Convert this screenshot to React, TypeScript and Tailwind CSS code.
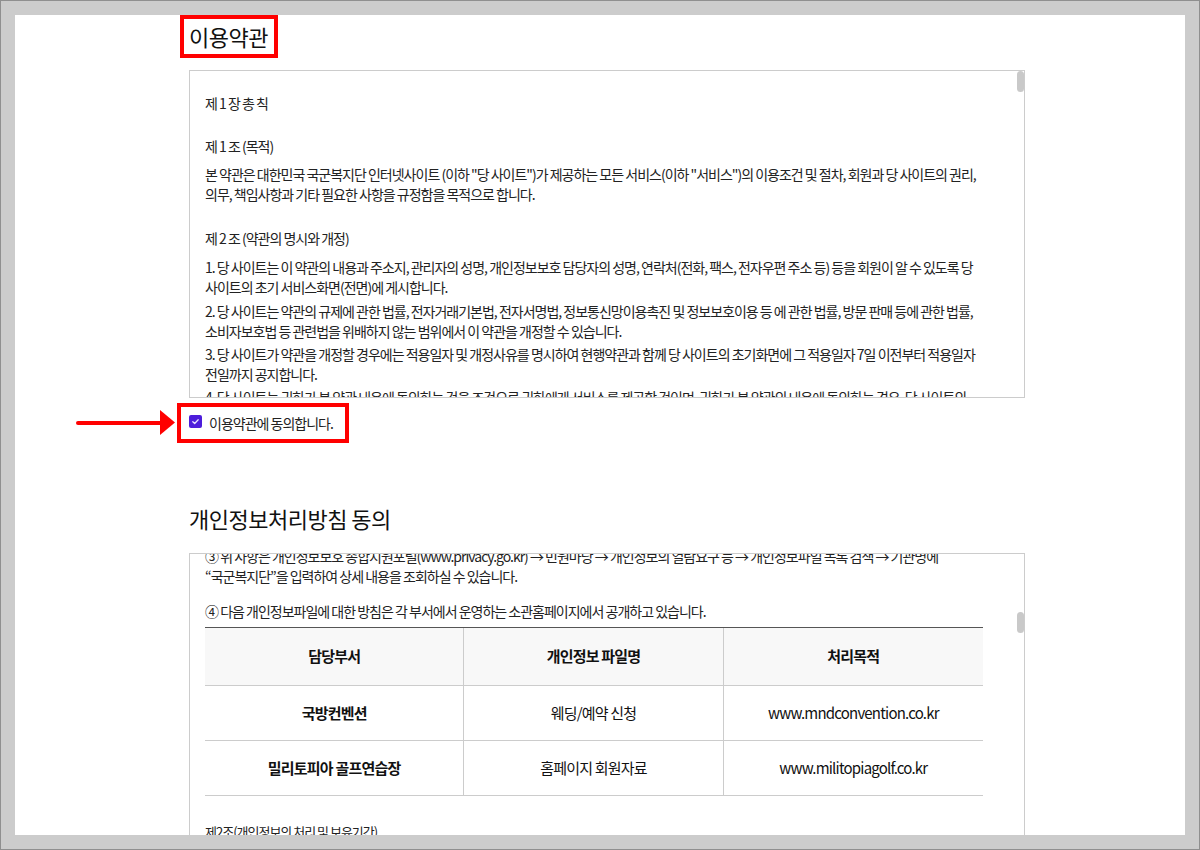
import React from "react";

function Line({ children, className = "" }: { children: React.ReactNode; className?: string }) {
  return <p className={"h-[20px] leading-[20px] whitespace-nowrap " + className}>{children}</p>;
}

export default function App() {
  return (
    <div className="w-[1200px] h-[850px] bg-[#cccccc] border border-[#8f8f8f] p-[14px] font-['Noto_Sans_CJK_KR',sans-serif] text-[#222222]">
      <div className="relative h-full bg-white overflow-hidden pl-[174px]">
        <div className="w-[836px] flex flex-col">
          {/* Title */}
          <div className="self-start ml-[-9px] h-[43px] border-4 border-[#ff0000] pl-[5px] pr-[6px] flex items-center text-[22px] tracking-[-0.5px] text-[#111111]">
            이용약관
          </div>

          {/* Terms box */}
          <div className="relative mt-[12px] h-[328px] border border-[#cccccc] overflow-hidden">
            <div className="absolute top-0 right-0 w-[7px] h-[21px] rounded-full bg-[#c9c9c9]" />
            <div className="pl-[15px] pt-[22px] text-[14px] tracking-[-1px]">
              <Line>제 1 장 총 칙</Line>
              <Line className="mt-[23px]">제 1 조 (목적)</Line>
              <div className="mt-[8px]">
                <Line>본 약관은 대한민국 국군복지단 인터넷사이트 (이하 "당 사이트")가 제공하는 모든 서비스(이하 "서비스")의 이용조건 및 절차, 회원과 당 사이트의 권리,</Line>
                <Line>의무, 책임사항과 기타 필요한 사항을 규정함을 목적으로 합니다.</Line>
              </div>
              <Line className="mt-[24px]">제 2 조 (약관의 명시와 개정)</Line>
              <div className="mt-[9px]">
                <Line>1. 당 사이트는 이 약관의 내용과 주소지, 관리자의 성명, 개인정보보호 담당자의 성명, 연락처(전화, 팩스, 전자우편 주소 등) 등을 회원이 알 수 있도록 당</Line>
                <Line>사이트의 초기 서비스화면(전면)에 게시합니다.</Line>
              </div>
              <div className="mt-[4px]">
                <Line>2. 당 사이트는 약관의 규제에 관한 법률, 전자거래기본법, 전자서명법, 정보통신망이용촉진 및 정보보호이용 등 에 관한 법률, 방문 판매 등에 관한 법률,</Line>
                <Line>소비자보호법 등 관련법을 위배하지 않는 범위에서 이 약관을 개정할 수 있습니다.</Line>
              </div>
              <div className="mt-[3px]">
                <Line>3. 당 사이트가 약관을 개정할 경우에는 적용일자 및 개정사유를 명시하여 현행약관과 함께 당 사이트의 초기화면에 그 적용일자 7일 이전부터 적용일자</Line>
                <Line>전일까지 공지합니다.</Line>
              </div>
              <div className="mt-[3px]">
                <Line>4. 당 사이트는 귀하가 본 약관 내용에 동의하는 것을 조건으로 귀하에게 서비스를 제공할 것이며, 귀하가 본 약관의 내용에 동의하는 경우, 당 사이트의</Line>
              </div>
            </div>
          </div>

          {/* Agree checkbox */}
          <div className="self-start mt-[5px] ml-[-12px] w-[172px] h-[40px] border-4 border-[#ff0000] pl-[8px] flex items-center gap-[7px]">
            <span className="w-[13px] h-[13px] rounded-[2px] bg-[#4d1ddb] flex items-center justify-center -mt-[3px]">
              <svg width="9" height="9" viewBox="0 0 10 10" fill="none">
                <path d="M2 5.2 L4.1 7.2 L8 3" stroke="#e9e2ff" strokeWidth="1.4" strokeLinecap="round" strokeLinejoin="round" />
              </svg>
            </span>
            <span className="text-[14px] tracking-[-1px] leading-[20px] whitespace-nowrap">이용약관에 동의합니다.</span>
          </div>

          {/* Privacy heading */}
          <h2 className="mt-[60px] text-[22px] leading-[30px] tracking-[-0.5px] text-[#111111]">개인정보처리방침 동의</h2>

          {/* Privacy box */}
          <div className="relative mt-[20px] h-[320px] border border-[#cccccc] overflow-hidden">
            <div className="absolute top-[58px] right-0 w-[7px] h-[21px] rounded-full bg-[#c9c9c9] z-10" />
            <div className="-mt-[8px] pl-[15px] text-[14px] tracking-[-1px]">
              <Line>③ 위 사항은 개인정보보호 종합지원포털(www.privacy.go.kr) → 민원마당 → 개인정보의 열람요구 등 → 개인정보파일 목록 검색 → 기관명에</Line>
              <Line>“국군복지단”을 입력하여 상세 내용을 조회하실 수 있습니다.</Line>
              <Line className="mt-[15px]">④ 다음 개인정보파일에 대한 방침은 각 부서에서 운영하는 소관홈페이지에서 공개하고 있습니다.</Line>

              <div className="mt-[6px] w-[778px] border-t border-[#555555] text-[15px] tracking-[-0.8px] text-[#111111]">
                <div className="grid grid-cols-3 h-[58px] bg-[#f8f8f8] border-b border-[#cccccc] font-bold">
                  <div className="flex items-center justify-center border-r border-[#cccccc]">담당부서</div>
                  <div className="flex items-center justify-center border-r border-[#cccccc]">개인정보 파일명</div>
                  <div className="flex items-center justify-center">처리목적</div>
                </div>
                <div className="grid grid-cols-3 h-[55px] border-b border-[#cccccc]">
                  <div className="flex items-center justify-center border-r border-[#cccccc] font-bold">국방컨벤션</div>
                  <div className="flex items-center justify-center border-r border-[#cccccc]">웨딩/예약 신청</div>
                  <div className="flex items-center justify-center">www.mndconvention.co.kr</div>
                </div>
                <div className="grid grid-cols-3 h-[55px] border-b border-[#cccccc]">
                  <div className="flex items-center justify-center border-r border-[#cccccc] font-bold">밀리토피아 골프연습장</div>
                  <div className="flex items-center justify-center border-r border-[#cccccc]">홈페이지 회원자료</div>
                  <div className="flex items-center justify-center">www.militopiagolf.co.kr</div>
                </div>
              </div>

              <Line className="mt-[26px] text-[13px]">제2조(개인정보의 처리 및 보유기간)</Line>
            </div>
          </div>
        </div>

        {/* Red arrow annotation */}
        <svg className="absolute left-[60px] top-[393px]" width="102" height="30" viewBox="0 0 102 30">
          <line x1="3" y1="15" x2="88" y2="15" stroke="#ff0000" strokeWidth="4" strokeLinecap="round" />
          <polygon points="85,2 100,14.5 85,27" fill="#ff0000" />
        </svg>
      </div>
    </div>
  );
}
